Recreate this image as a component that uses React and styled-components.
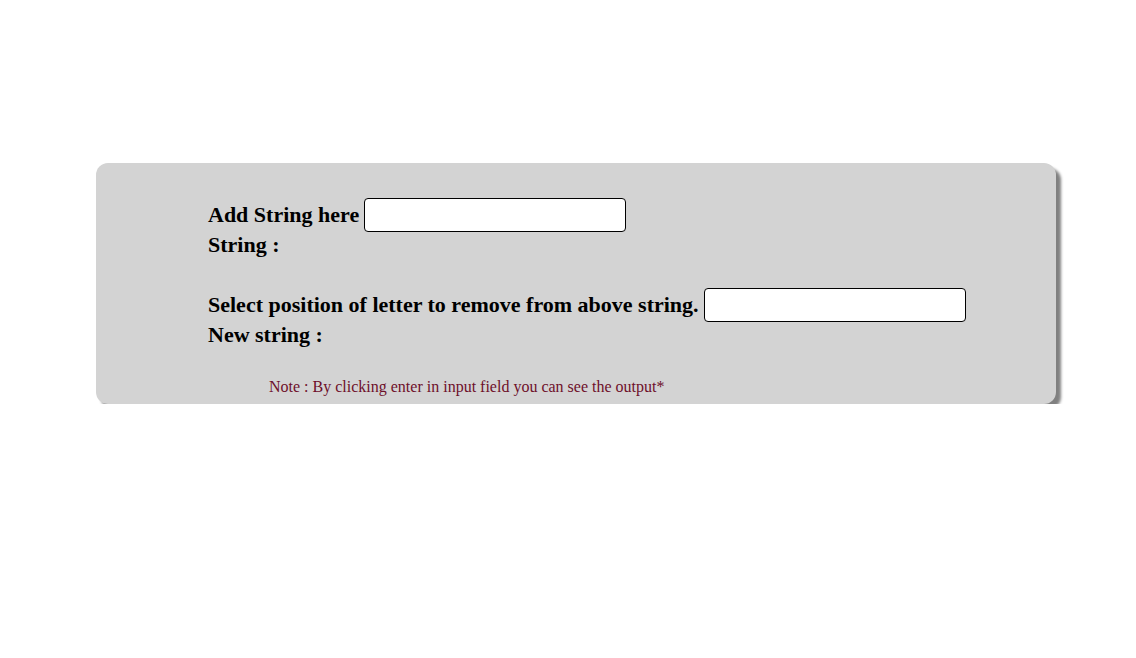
import React from "react";
import styled, { createGlobalStyle } from "styled-components";

const GlobalStyle = createGlobalStyle`
  body {
    margin: 8px;
    background: #ffffff;
    font-family: "Liberation Serif", "Times New Roman", serif;
  }
`;

export default function App() {
  return (
    <>
      <GlobalStyle />
      <Card>
        <Row>
          <Label>Add String here</Label>
          <Field type="text" />
        </Row>
        <Output>String :</Output>
        <Row marginTop={"30px"}>
          <Label>Select position of letter to remove from above string.</Label>
          <Field type="text" />
        </Row>
        <Output>New string :</Output>
        <Note>Note : By clicking enter in input field you can see the output*</Note>
      </Card>
    </>
  );
}

const Card = styled.div`
  background-color: #d3d3d3;
  width: 960px;
  box-sizing: border-box;
  margin: 155px 0 0 88px;
  padding: 35px 0 8px 112px;
  border-radius: 12px;
  box-shadow: 5px 5px 3px #808080;
  display: flex;
  flex-direction: column;
  align-items: flex-start;
`;

const Row = styled.div`
  display: flex;
  flex-direction: row;
  align-items: center;
  gap: 5px;
  margin-top: ${(props) => props.marginTop || "0px"};
`;

const Label = styled.span`
  font-size: 22px;
  font-weight: 700;
  color: #000000;
  line-height: 26px;
  margin-top: -1px;
`;

const Field = styled.input`
  width: 262px;
  height: 34px;
  box-sizing: border-box;
  border: 1px solid #000000;
  border-radius: 4px;
  background: #ffffff;
  padding: 0 4px;
  outline: none;
`;

const Output = styled.div`
  font-size: 22px;
  font-weight: 700;
  color: #000000;
  line-height: 26px;
`;

const Note = styled.p`
  margin: 29px 0 0 61px;
  font-size: 16px;
  line-height: 19px;
  color: #6e0f2a;
`;
